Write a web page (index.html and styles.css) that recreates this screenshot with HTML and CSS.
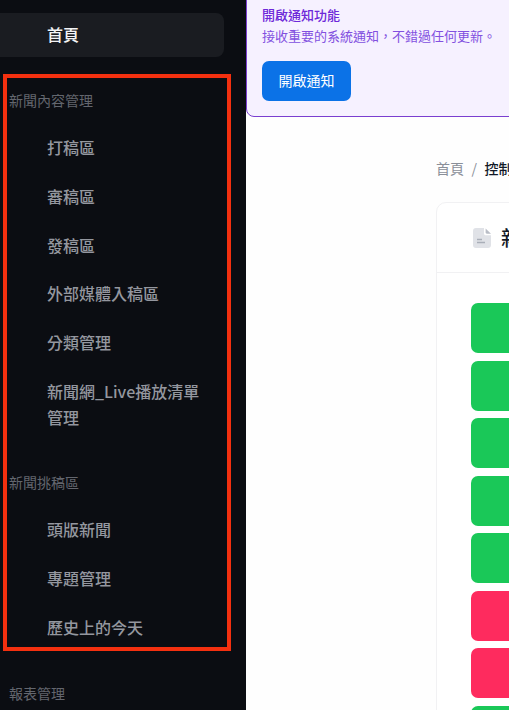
FILE: index.html
```html
<!DOCTYPE html>
<html lang="zh-Hant">
<head>
    <meta charset="UTF-8">
    <meta name="viewport" content="width=device-width, initial-scale=1.0">
    <title>控制台</title>
    <link rel="stylesheet" href="styles.css">
</head>
<body>
    <div class="layout">
        <aside class="sidebar">
            <a class="nav-home" href="#">首頁</a>

            <div class="nav-title">新聞內容管理</div>
            <ul class="nav-list">
                <li><a href="#">打稿區</a></li>
                <li><a href="#">審稿區</a></li>
                <li><a href="#">發稿區</a></li>
                <li><a href="#">外部媒體入稿區</a></li>
                <li><a href="#">分類管理</a></li>
                <li><a href="#">新聞網_Live播放清單管理</a></li>
            </ul>

            <div class="nav-title">新聞挑稿區</div>
            <ul class="nav-list">
                <li><a href="#">頭版新聞</a></li>
                <li><a href="#">專題管理</a></li>
                <li><a href="#">歷史上的今天</a></li>
            </ul>

            <div class="nav-title">報表管理</div>

            <!-- 標註框，蓋在選單上面 -->
            <div class="highlight"></div>
        </aside>

        <main class="main">
            <section class="notice">
                <div class="notice-title">開啟通知功能</div>
                <div class="notice-text">接收重要的系統通知，不錯過任何更新。</div>
                <button class="notice-btn">開啟通知</button>
            </section>

            <div class="content">
                <div class="breadcrumb">
                    <span>首頁</span>
                    <span class="sep">/</span>
                    <strong>控制台</strong>
                </div>

                <section class="card">
                    <header class="card-head">
                        <svg class="card-icon" width="18" height="20" viewBox="0 0 18 20">
                            <path d="M3 0h8v5.5c0 1 .8 1.8 1.8 1.8H18V17a3 3 0 0 1-3 3H3a3 3 0 0 1-3-3V3a3 3 0 0 1 3-3z" fill="#e0e2e7"/>
                            <path d="M12.6 0.4 18 5.8h-4.2c-.7 0-1.2-.5-1.2-1.2z" fill="#b9bdc6"/>
                            <path d="M4 11.5h5M4 14.5h8" stroke="#a9aeb8" stroke-width="1.3" fill="none"/>
                        </svg>
                        <h2>新聞狀態總覽</h2>
                    </header>
                    <div class="status-list">
                        <div class="status ok"></div>
                        <div class="status ok"></div>
                        <div class="status ok"></div>
                        <div class="status ok"></div>
                        <div class="status ok"></div>
                        <div class="status bad"></div>
                        <div class="status bad"></div>
                        <div class="status ok"></div>
                    </div>
                </section>
            </div>
        </main>
    </div>
</body>
</html>
```

FILE: styles.css
```css
* {
    box-sizing: border-box;
}
html, body {
    margin: 0;
    padding: 0;
    height: 710px;
    overflow: hidden;
}
body {
    font-family: "Noto Sans CJK TC", "Noto Sans", sans-serif;
    background-color: #fefefe;
}
ul, li {
    list-style: none;
    margin: 0;
    padding: 0;
}
a {
    text-decoration: none;
    color: inherit;
}
.layout {
    display: flex;
    height: 710px;
}

/* 左側選單 */
.sidebar {
    position: relative;
    flex: 0 0 246px;
    padding-top: 13px;
    background-color: #0b0d12;
    overflow: hidden;
}
.nav-home {
    display: block;
    width: 234px;
    height: 44px;
    margin: 0 0 21px -10px;
    padding-left: 57px;
    border-radius: 8px;
    background-color: #1a1c21;
    color: #f2f3f5;
    font-size: 16px;
    font-weight: 500;
    line-height: 42px;
}
.nav-title {
    padding: 11px 0 13px 9px;
    color: #63666e;
    font-size: 14px;
    line-height: 22px;
}
.nav-list {
    display: flex;
    flex-direction: column;
    gap: 0.75px;
    margin-bottom: 18px;
}
.nav-list:last-of-type {
    gap: 1px;
    margin-bottom: 19px;
}
.nav-list li a {
    display: block;
    width: 165px;
    margin-left: 47px;
    padding: 10px 0 12px;
    color: #94979f;
    font-size: 16px;
    font-weight: 500;
    line-height: 26px;
}
.highlight {
    position: absolute;
    left: 3px;
    top: 74px;
    width: 228px;
    height: 577px;
    border: 4px solid #f4300f;
}

/* 右側內容 */
.main {
    flex: 1;
    min-width: 0;
    overflow: hidden;
}
.notice {
    width: 700px;
    height: 132px;
    margin-top: -15px;
    padding: 20px 15px 0;
    border: 1px solid #7a3fd0;
    border-radius: 0 0 0 8px;
    background-color: #f6f1ff;
}
.notice-title {
    color: #6d28d9;
    font-size: 13px;
    font-weight: 500;
    line-height: 18px;
}
.notice-text {
    margin-top: 2px;
    color: #8250df;
    font-size: 13px;
    line-height: 20px;
}
.notice-btn {
    display: block;
    width: 89px;
    height: 40px;
    margin-top: 15px;
    padding: 0 0 2px;
    border: 0;
    border-radius: 7px;
    background-color: #0b72e7;
    color: #fff;
    font-family: inherit;
    font-size: 14px;
    font-weight: 400;
}
.content {
    width: 800px;
    padding: 39px 0 0 190px;
}
.breadcrumb {
    display: flex;
    align-items: center;
    gap: 7.5px;
    height: 24px;
    color: #8a8f99;
    font-size: 14px;
}
.breadcrumb strong {
    color: #111827;
    font-weight: 500;
}
.card {
    margin-top: 22px;
    border: 1px solid #f1f1f3;
    border-radius: 10px;
    background-color: #fff;
}
.card-head {
    display: flex;
    align-items: center;
    gap: 10px;
    height: 70px;
    padding-left: 36px;
    border-bottom: 1px solid #f1f1f3;
}
.card-head h2 {
    margin: 0;
    color: #111827;
    font-size: 20px;
    font-weight: 500;
}
.status-list {
    display: flex;
    flex-direction: column;
    gap: 7.5px;
    padding: 30px 34px;
}
.status {
    height: 50px;
    border-radius: 7px;
}
.status.ok {
    background-color: #1ac858;
}
.status.bad {
    background-color: #fe2b5e;
}
```
